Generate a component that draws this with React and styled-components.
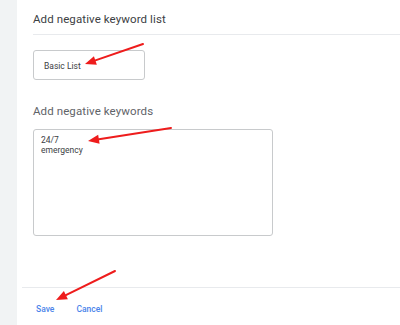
import React from 'react'
import styled, { createGlobalStyle } from 'styled-components'

const GlobalStyle = createGlobalStyle`
  html, body {
    margin: 0;
    padding: 0;
    background: #fff;
    font-family: Roboto, 'Liberation Sans', Arial, sans-serif;
  }
`

const Page = styled.div`
  position: relative;
  display: flex;
  width: 400px;
  height: 325px;
  overflow: hidden;
`
const SideStrip = styled.div`
  width: 17px;
  background: #f1f3f4;
  flex-shrink: 0;
`
const Main = styled.div`
  flex: 1;
  display: flex;
  flex-direction: column;
  background: #fff;
`
const Header = styled.div`
  margin-left: 16px;
  height: 35px;
  border-bottom: 1px solid #e8eaed;
  display: flex;
  align-items: center;
  box-sizing: border-box;
  padding-top: 3px;
`
const Title = styled.h2`
  margin: 0;
  font-size: 11.5px;
  font-weight: 400;
  color: #3c4043;
  letter-spacing: 0.1px;
`
const Body = styled.div`
  padding: 15px 0 0 16px;
  flex: 1;
  display: flex;
  flex-direction: column;
`
const TextBox = styled.div`
  width: 112px;
  height: 30px;
  box-sizing: border-box;
  border: 1px solid #c8cacc;
  border-radius: 3px;
  display: flex;
  align-items: center;
  padding: 1px 0 0 10px;
  font-size: 8.5px;
  color: #3c4043;
`
const Label = styled.div`
  margin-top: 24px;
  font-size: 11.5px;
  color: #5f6368;
  letter-spacing: 0.1px;
`
const TextArea = styled.div`
  margin-top: 11px;
  width: 240px;
  height: 107px;
  box-sizing: border-box;
  border: 1px solid #c8cacc;
  border-radius: 3px;
  padding: 5px 0 0 7px;
  font-size: 8.5px;
  line-height: 10px;
  color: #3c4043;
`
const Footer = styled.div`
  margin-left: 5px;
  height: 38px;
  border-top: 1px solid #e8eaed;
  display: flex;
  align-items: center;
  gap: 22px;
  padding: 4px 0 0 14px;
  box-sizing: border-box;
`
const LinkButton = styled.button`
  background: none;
  border: 0;
  padding: 0;
  font-family: inherit;
  font-size: 8.5px;
  font-weight: 500;
  color: #4a84ea;
  cursor: pointer;
`
const Overlay = styled.svg`
  position: absolute;
  left: 0;
  top: 0;
  pointer-events: none;
`

const Arrow = ({ x1, y1, x2, y2 }) => {
  const ang = Math.atan2(y2 - y1, x2 - x1)
  const len = 11
  const w = 4.5
  const bx = x2 - len * Math.cos(ang)
  const by = y2 - len * Math.sin(ang)
  const px = -Math.sin(ang) * w
  const py = Math.cos(ang) * w
  return (
    <g>
      <line x1={x1} y1={y1} x2={bx} y2={by} stroke="#ee1c1c" strokeWidth="2" strokeLinecap="round" />
      <polygon
        points={`${x2},${y2} ${bx + px},${by + py} ${bx - px},${by - py}`}
        fill="#ee1c1c"
      />
    </g>
  )
}

export default function App() {
  return (
    <Page>
      <GlobalStyle />
      <SideStrip />
      <Main>
        <Header>
          <Title>Add negative keyword list</Title>
        </Header>
        <Body>
          <TextBox>Basic List</TextBox>
          <Label>Add negative keywords</Label>
          <TextArea>
            24/7
            <br />
            emergency
          </TextArea>
        </Body>
        <Footer>
          <LinkButton>Save</LinkButton>
          <LinkButton>Cancel</LinkButton>
        </Footer>
      </Main>
      <Overlay width="400" height="325">
        <Arrow x1={143} y1={44} x2={85} y2={64} />
        <Arrow x1={171} y1={128} x2={88} y2={141} />
        <Arrow x1={115} y1={271} x2={56} y2={300} />
      </Overlay>
    </Page>
  )
}
